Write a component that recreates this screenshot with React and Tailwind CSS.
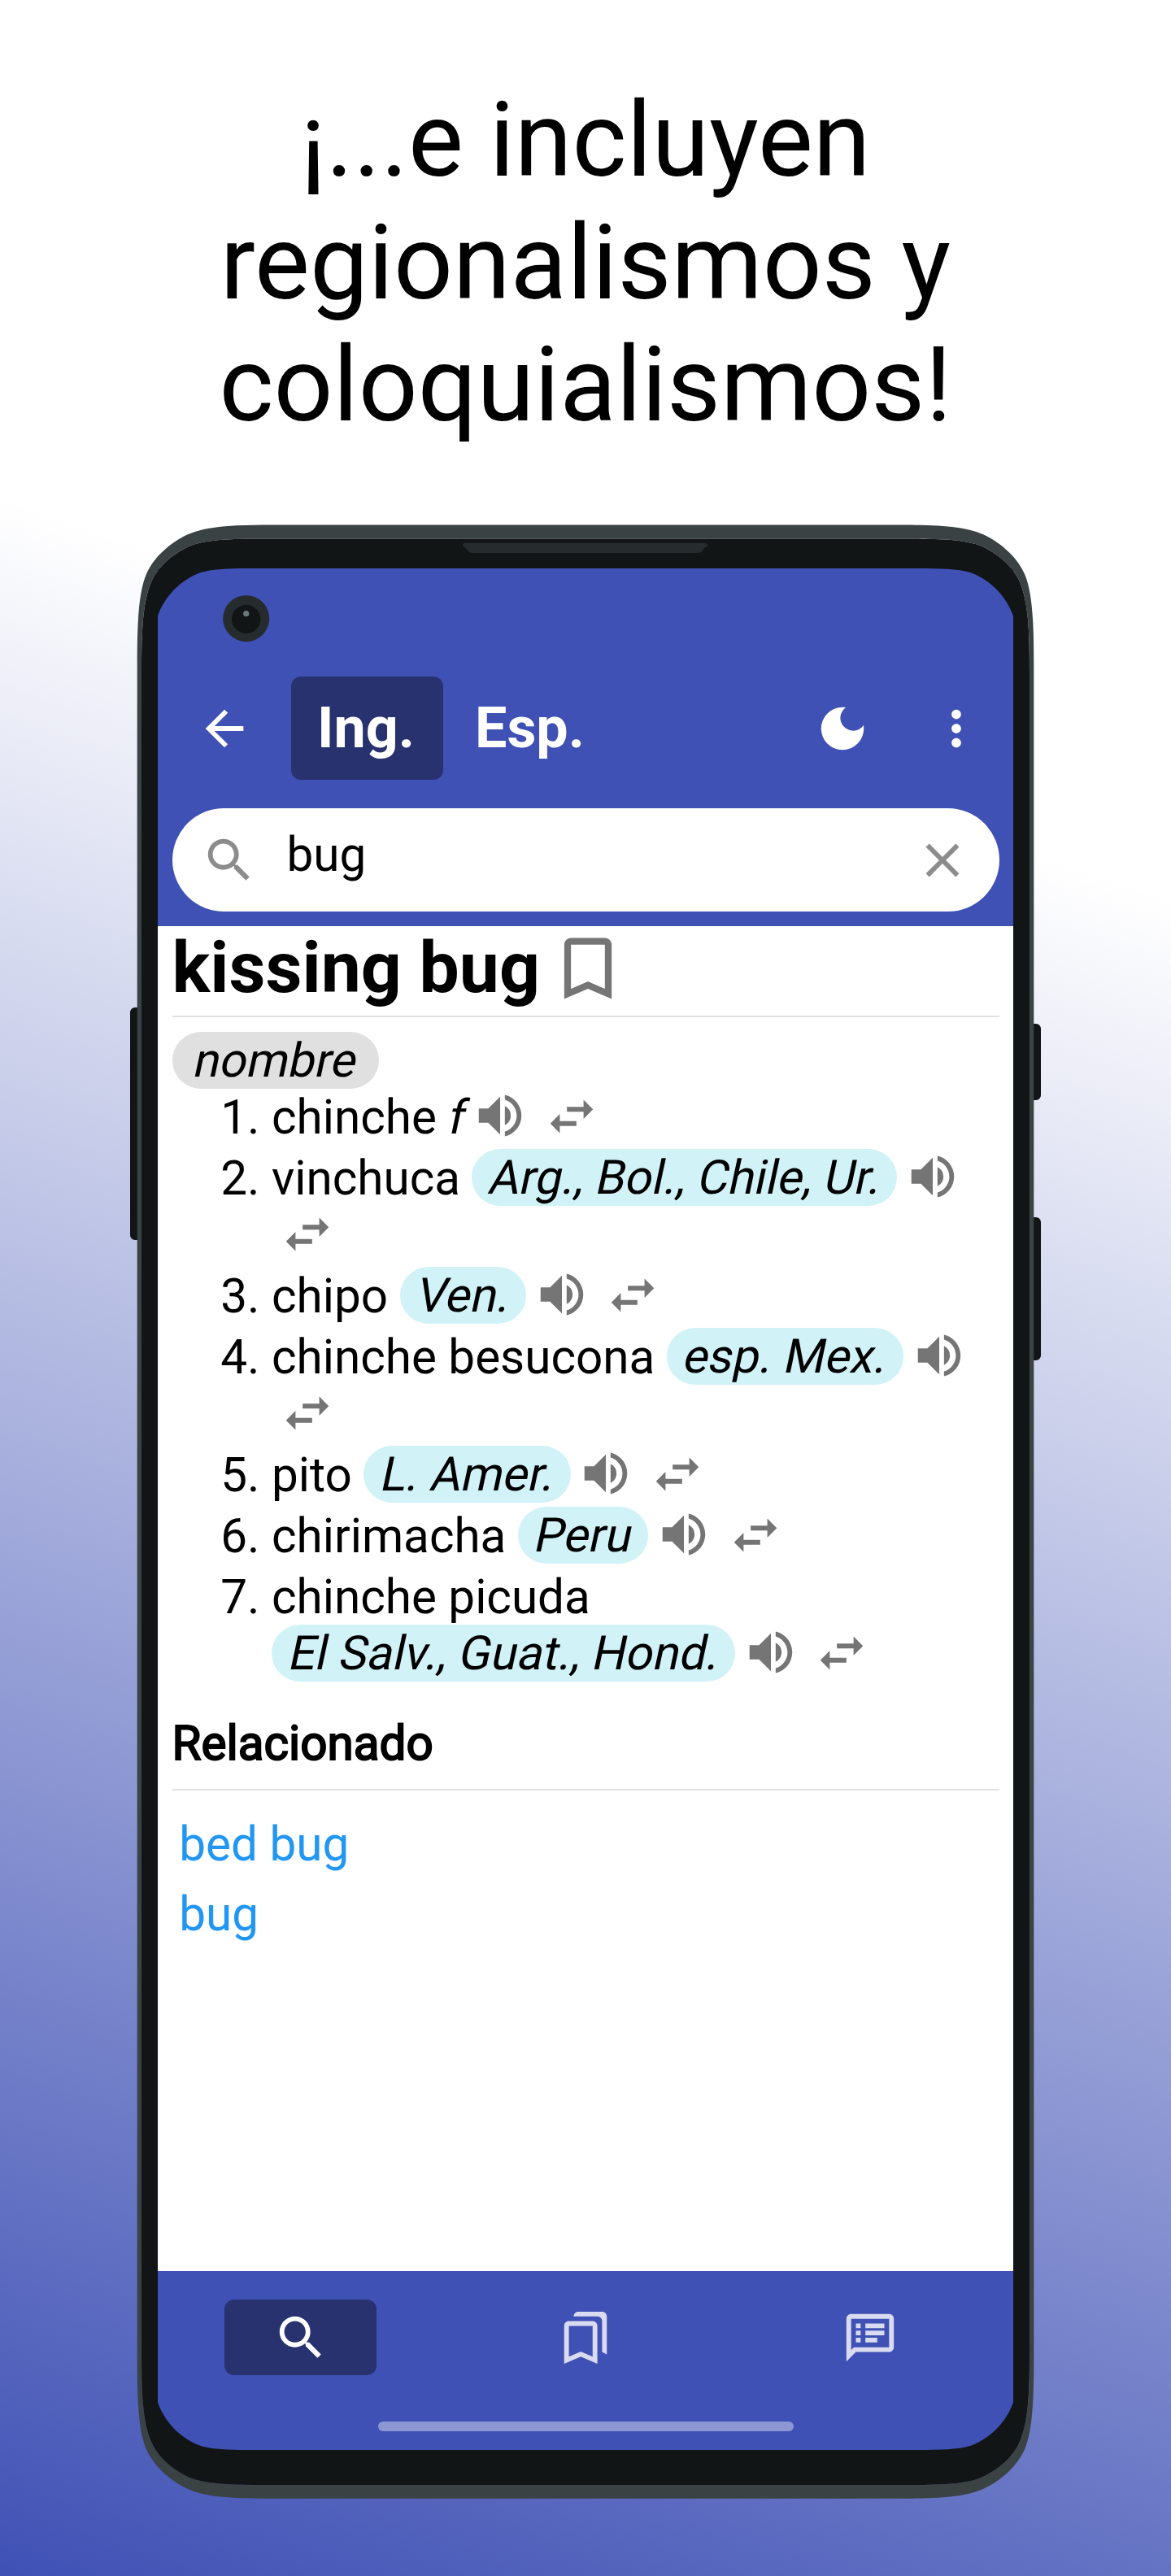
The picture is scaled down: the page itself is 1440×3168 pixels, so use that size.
import { MdArrowBack, MdDarkMode, MdMoreVert, MdSearch, MdClose, MdBookmarkBorder, MdVolumeUp, MdSwapHoriz } from "react-icons/md";

// Builds a closed outline from one corner curve, mirrored to all four corners.
const rounded = (l, t, r, b, pts) => {
  const P = (fx, fy) => ([x, y]) => `${fx ? r - x : l + x} ${fy ? b - y : t + y}`;
  const seg = (f, list) => {
    let s = "";
    for (let i = 0; i < list.length; i += 3) s += `C${list.slice(i, i + 3).map(f).join(",")}`;
    return s;
  };
  const rev = [...pts].reverse();
  return (
    `M${P(0, 0)(pts[0])}` + seg(P(0, 0), pts.slice(1)) +
    `L${P(1, 0)(rev[0])}` + seg(P(1, 0), rev.slice(1)) +
    `L${P(1, 1)(pts[0])}` + seg(P(1, 1), pts.slice(1)) +
    `L${P(0, 1)(rev[0])}` + seg(P(0, 1), rev.slice(1)) + "Z"
  );
};
const outer = rounded(168.7, 645.5, 1271.3, 3072.7, [[0, 170], [0, 115], [2.3, 81.5], [11.3, 60.5], [21.3, 37.5], [46.3, 16.5], [70.8, 8.5], [93.3, 1], [126, 0], [166, 0]]);
const bezel = rounded(174, 662.5, 1266, 3056, [[0, 168], [0, 118], [0.5, 76], [13.8, 49.3], [23, 31.5], [43, 14.5], [65.5, 6.8], [88, 0.3], [116, 0], [161, 0]]);
const screen = rounded(194, 699, 1246, 3013, [[0, 58.5], [7, 38], [25, 15], [53, 5], [68, 0.5], [91, 0], [116, 0]]);

function Device() {
  return (
    <svg className="pointer-events-none absolute inset-0" width="1440" height="3168" viewBox="0 0 1440 3168" aria-hidden="true">
      <path d="M169 1239h-3a6 6 0 0 0-6 6v274a6 6 0 0 0 6 6h3zM1271 1259h3a6 6 0 0 1 6 6v82a6 6 0 0 1-6 6h-3zM1271 1497h3a6 6 0 0 1 6 6v164a6 6 0 0 1-6 6h-3z" fill="#111516" />
      <path d={outer + bezel} fillRule="evenodd" fill="#3b4244" />
      <path d={bezel + screen} fillRule="evenodd" fill="#111516" />
      <path d="M572 668H867Q871 668 870 671.5Q866 673 864 677Q862 680 858 680H581Q577 680 575 677Q572 673 569 671.5Q568 668 572 668Z" fill="#262b2d" />
      <circle cx="302.7" cy="760.7" r="28.5" fill="#262b2d" />
      <circle cx="302.7" cy="761.5" r="17.7" fill="#111516" />
      <circle cx="302.7" cy="754.7" r="3.6" fill="#6b787a" />
    </svg>
  );
}

const senses = [
  { word: "chinche", gender: "f" },
  { word: "vinchuca", region: "Arg., Bol., Chile, Ur.", swapBelow: true },
  { word: "chipo", region: "Ven." },
  { word: "chinche besucona", region: "esp. Mex.", swapBelow: true },
  { word: "pito", region: "L. Amer." },
  { word: "chirimacha", region: "Peru" },
  { word: "chinche picuda", region: "El Salv., Guat., Hond.", regionBelow: true },
];

// Upright Roboto slanted, so that it keeps the upright advance widths.
const Oblique = ({ children }) => (
  <span className="inline-block origin-[50%_44px] skew-x-[-12deg] whitespace-pre leading-[70px]">{children}</span>
);
const Speaker = () => <MdVolumeUp className="mx-[8.8px] -mt-px size-[70px] shrink-0 text-[#757575]" />;
const Swap = ({ className = "" }) => <MdSwapHoriz className={"mx-[8.8px] size-[70px] shrink-0 text-[#757575] " + className} />;
const Region = ({ children }) => (
  <span className="h-[70px] shrink-0 rounded-full bg-[#d1f2f7] px-[20.5px] leading-[70px]"><Oblique>{children}</Oblique></span>
);

function Sense({ s, n }) {
  return (
    <li className="flex">
      <span className="w-[140px] shrink-0 whitespace-pre pt-px text-right leading-[70px]">{n}. </span>
      <div className="flex flex-col">
        <div className={"flex items-start whitespace-pre " + (s.regionBelow ? "h-[70px]" : "h-[75px]")}>
          <span className="pt-px leading-[70px]">{s.word} </span>
          {s.gender && <span className="pt-px leading-[70px]"><Oblique>{s.gender}</Oblique></span>}
          {!s.regionBelow && s.region && <Region>{s.region}</Region>}
          {!s.regionBelow && <Speaker />}
          {!s.regionBelow && !s.swapBelow && <Swap />}
        </div>
        {s.swapBelow && <div className="flex h-[70px]"><Swap className="-mt-[5px]" /></div>}
        {s.regionBelow && <div className="flex h-[70px]"><Region>{s.region}</Region><Speaker /><Swap /></div>}
      </div>
    </li>
  );
}

export default function App() {
  return (
    <main className="relative h-[3168px] w-[1440px] overflow-hidden bg-[linear-gradient(199deg,#ffffff_0%,#ffffff_30.2%,#3f51b5_100%)] font-['Roboto',sans-serif] text-black">
      <h1 className="flex h-[699px] flex-col items-center whitespace-nowrap pt-[97px] text-[128px] leading-[150.5px]">
        <span>¡...e incluyen</span>
        <span>regionalismos y</span>
        <span>coloquialismos!</span>
      </h1>
      <section className="mx-auto flex h-[2314px] w-[1052px] flex-col bg-white text-[58.4px]">
        <header className="flex h-[440px] shrink-0 flex-col bg-[#3f51b5] px-[17.5px] pt-[133px]">
          <div className="flex h-[127px] items-center text-white">
            <MdArrowBack className="ml-[29.5px] size-[70px]" />
            <div className="ml-[47px] flex h-[127px] w-[187px] items-center rounded-xl bg-[#27326f] pl-[32px] text-[70px] font-bold">Ing.</div>
            <div className="ml-[39px] text-[70px] font-bold">Esp.</div>
            <MdDarkMode className="ml-auto size-[70px]" />
            <MdMoreVert className="mr-[17.5px] ml-[70px] size-[70px]" />
          </div>
          <div className="mt-[35px] flex h-[127px] items-center rounded-full bg-white">
            <MdSearch className="ml-[35px] size-[70px] text-[#8c8c8c]" />
            <span className="-mt-[12px] ml-[36px]">bug</span>
            <MdClose className="mr-[35px] ml-auto size-[70px] text-[#8c8c8c]" />
          </div>
        </header>
        <article className="flex grow flex-col px-[17.5px]">
          <div className="flex h-[112px] border-b-2 border-[#e2e2e2]">
            <h2 className="text-[87.6px] leading-[103px] font-bold">kissing bug</h2>
            <MdBookmarkBorder className="mt-[2px] ml-[8.8px] size-[100px] text-[#757575]" />
          </div>
          <div className="mt-[18px] h-[70px] w-[254px] rounded-full bg-[#e0e0e0] pl-[26px] leading-[70px]"><Oblique>nombre</Oblique></div>
          <ol className="-mt-px -ml-[17.5px] flex flex-col">
            {senses.map((s, i) => <Sense key={s.word} s={s} n={i + 1} />)}
          </ol>
          <h3 className="mt-[41px] h-[93px] border-b-2 border-[#e2e2e2] leading-[70px] font-normal [-webkit-text-stroke:2px_black]">Relacionado</h3>
          <div className="mt-[23px] ml-[8.8px] flex flex-col leading-[86px] text-[#2196f3]">
            <a>bed bug</a>
            <a>bug</a>
          </div>
        </article>
        <footer className="flex h-[220px] shrink-0 flex-col items-center bg-[#3f51b5]">
          <nav className="mt-[35px] flex h-[93px] w-full items-center">
            <div className="ml-[82px] flex h-[93px] w-[187px] items-center justify-center rounded-xl bg-[#27326f]">
              <MdSearch className="size-[70px] text-white" />
            </div>
            <svg viewBox="0 0 24 24" className="ml-[222px] size-[70px] fill-[#d9dbf0]"><path d="M15 7v12.97l-4.21-1.81-.79-.34-.79.34L5 19.97V7h10m4-6H8.99C7.89 1 7 1.9 7 3h10c1.1 0 2 .9 2 2v13l2 1V3c0-1.1-.9-2-2-2zm-4 4H5c-1.1 0-2 .9-2 2v16l7-3 7 3V7c0-1.1-.9-2-2-2z" /></svg>
            <svg viewBox="0 0 24 24" className="ml-[280px] size-[70px] fill-[#d9dbf0]"><path d="M20 2H4c-1.1 0-2 .9-2 2v18l4-4h14c1.1 0 2-.9 2-2V4c0-1.1-.9-2-2-2zm0 14H5.17L4 17.17V4h16v12zM6 12h2v2H6zm0-3h2v2H6zm0-3h2v2H6zm4 6h5v2h-5zm0-3h8v2h-8zm0-3h8v2h-8z" /></svg>
          </nav>
          <div className="mt-[57px] h-[12px] w-[511px] rounded-full bg-[#8c96d3]" />
        </footer>
      </section>
      <Device />
    </main>
  );
}
